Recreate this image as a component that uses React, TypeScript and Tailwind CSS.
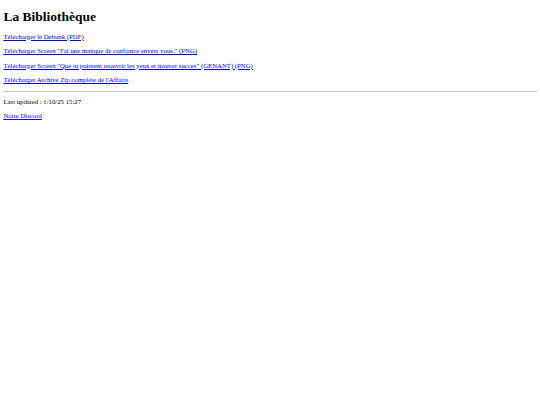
const LINKS = [
  "Télécharger le Debunk (PDF)",
  "Télécharger Screen \"J'ai une manque de confiance envers vous.\" (PNG)",
  "Télécharger Screen \"Que tu puissent reouvrir les yeux et trouver succes\" (GENANT) (PNG)",
  "Télécharger Archive Zip complète de l'Affaire",
];

export default function App() {
  return (
    <div className="min-h-[405px] bg-white px-[3.4px] pt-[9px] text-black font-['Liberation_Serif','Times_New_Roman',serif]">
      <h1 className="text-[13.5px] font-bold leading-[15.5px] mb-[8px]">La Bibliothèque</h1>

      <div className="flex flex-col gap-[6.75px] text-[6.75px] leading-[7.8px]">
        {LINKS.map((label) => (
          <p key={label}>
            <a href="#" className="text-[#0000ee] underline">
              {label}
            </a>
          </p>
        ))}
      </div>

      <hr className="my-[6.75px] border-0 border-t border-[#c4c4c4]" />

      <div className="flex flex-col gap-[5.8px] text-[6.75px] leading-[7.8px]">
        <p>Last updated : 1/10/25 15:27</p>
        <p>
          <a href="#" className="text-[#0000ee] underline">
            Notre Discord
          </a>
        </p>
      </div>
    </div>
  );
}
